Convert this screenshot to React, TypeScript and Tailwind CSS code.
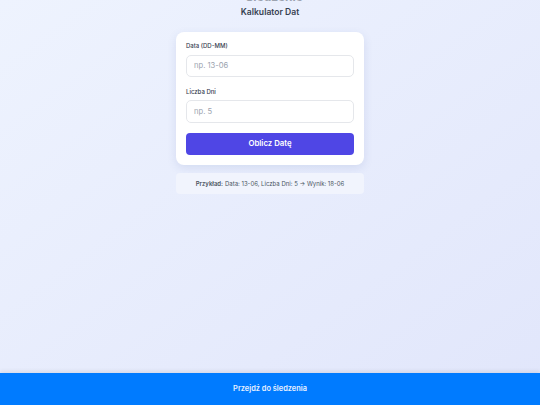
export default function App() {
  return (
    <div className="relative h-[405px] w-[540px] overflow-hidden bg-gradient-to-br from-[#eef3fe] to-[#e1e6fb] font-['Inter',sans-serif]">
      <div className="flex flex-col items-center">
        <div className="-mt-[9px] text-[12px] font-bold leading-[12px] text-[#9ca3af]">• Śledzenie</div>
        <h1 className="mt-[3px] text-[8.6px] font-semibold leading-[12px] text-[#374151]">Kalkulator Dat</h1>

        <div className="mt-[14px] w-[188px] rounded-[8px] bg-white px-[10px] pb-[10px] pt-[9px] shadow-[0_3px_10px_rgba(60,80,160,0.12)]">
          <label className="block text-[6px] font-medium leading-[9px] text-[#374151]">Data (DD-MM)</label>
          <input
            placeholder="np. 13-06"
            className="mt-[3px] h-[22px] w-full rounded-[5px] border border-[#e5e7eb] px-[7px] text-[7.6px] text-[#374151] outline-none placeholder:text-[#9ca3af]"
          />
          <label className="mt-[10px] block text-[6px] font-medium leading-[9px] text-[#374151]">Liczba Dni</label>
          <input
            placeholder="np. 5"
            className="mt-[3px] h-[23px] w-full rounded-[5px] border border-[#e5e7eb] px-[7px] text-[7.6px] text-[#374151] outline-none placeholder:text-[#9ca3af]"
          />
          <button
            type="button"
            className="mt-[10px] h-[22px] w-full rounded-[4px] bg-[#4f46e5] text-[7.8px] font-semibold text-white"
          >
            Oblicz Datę
          </button>
        </div>

        <div className="mt-[8px] flex h-[21px] w-[188px] items-center justify-center rounded-[4px] bg-[#f1f4fd] text-[6px] text-[#4b5563]">
          <span className="font-semibold">Przykład:</span>
          <span className="ml-[2px]">Data: 13-06, Liczba Dni: 5 → Wynik: 18-06</span>
        </div>
      </div>

      <div className="absolute bottom-0 left-0 flex h-[32px] w-full items-center justify-center bg-[#007bff] shadow-[0_-2px_4px_rgba(0,0,0,0.08)]">
        <span className="text-[7.4px] font-semibold text-[#e6f0ff]">Przejdź do śledzenia</span>
      </div>
    </div>
  );
}
